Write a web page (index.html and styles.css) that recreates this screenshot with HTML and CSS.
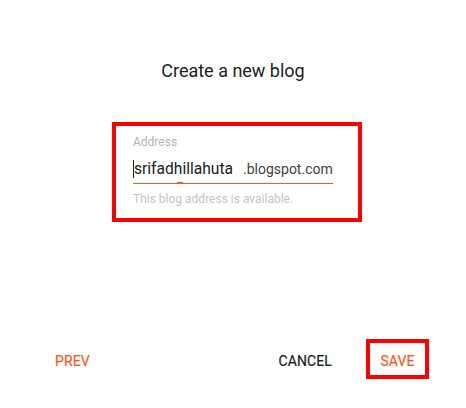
FILE: index.html
```html
<!DOCTYPE html>
<html>
<head>
<meta charset="utf-8">
<link rel="stylesheet" href="styles.css">
</head>
<body>
<div class="dialog">
  <h1 class="title">Create a new blog</h1>
  <div class="field-wrap">
    <div class="field">
      <div class="label">Address</div>
      <div class="input-row">
        <span class="caret"></span><span class="value">srifadhillahutami</span><span class="suffix">.blogspot.com</span>
      </div>
      <div class="underline"><span class="mark"></span></div>
      <div class="helper">This blog address is available.</div>
    </div>
  </div>
  <div class="actions">
    <button class="btn btn-prev">PREV</button>
    <div class="right">
      <button class="btn btn-cancel">CANCEL</button>
      <div class="save-box"><button class="btn btn-save">SAVE</button></div>
    </div>
  </div>
</div>
</body>
</html>
```
FILE: styles.css
```css
html, body {
  margin: 0;
  padding: 0;
  background: #ffffff;
}
body {
  font-family: Roboto, "Noto Sans", sans-serif;
}
.dialog {
  width: 466px;
  height: 408px;
  display: flex;
  flex-direction: column;
  box-sizing: border-box;
}
.title {
  margin: 60px 0 0 0;
  font-size: 18px;
  font-weight: 400;
  color: #212121;
  text-align: center;
  line-height: 22px;
}
.field-wrap {
  margin-top: 40px;
  padding-left: 112px;
}
.field {
  width: 250px;
  height: 100px;
  box-sizing: border-box;
  border: 4px solid #ff0000;
  padding: 9px 0 0 17px;
}
.label {
  font-size: 12px;
  color: #b4b4b4;
  line-height: 14px;
}
.input-row {
  margin-top: 9px;
  display: flex;
  align-items: center;
  height: 22px;
  width: 200px;
  line-height: 20px;
}
.caret {
  width: 1px;
  height: 18px;
  background: #212121;
  flex: none;
}
.value {
  width: 99px;
  overflow: hidden;
  white-space: nowrap;
  color: #212121;
  font-size: 15.6px;
  flex: none;
}
.suffix {
  margin-left: 10px;
  color: #424242;
  font-size: 14px;
  white-space: nowrap;
}
.underline {
  position: relative;
  width: 200px;
  height: 1px;
  background: #ff5722;
  margin-top: 3px;
}
.mark {
  position: absolute;
  left: 44px;
  top: -1px;
  width: 6px;
  height: 2px;
  background: #ff5722;
}
.helper {
  margin-top: 8px;
  font-size: 12px;
  color: #c6c6c6;
  line-height: 14px;
}
.actions {
  margin-top: auto;
  margin-bottom: 29px;
  display: flex;
  align-items: center;
  justify-content: space-between;
  padding: 0 37px 0 38px;
}
.right {
  display: flex;
  align-items: center;
  gap: 34px;
}
.btn {
  border: none;
  background: none;
  padding: 3px 0 0 0;
  font-family: Roboto, "Noto Sans", sans-serif;
  font-size: 14px;
  font-weight: 400;
  letter-spacing: 0.1px;
  cursor: pointer;
  -webkit-text-stroke: 0.2px currentColor;
}
.btn-prev {
  color: #ff5722;
  padding: 3px 17px 0 17px;
}
.btn-cancel {
  color: #212121;
}
.save-box {
  width: 63px;
  height: 40px;
  box-sizing: border-box;
  border: 4px solid #ff0000;
  display: flex;
  align-items: center;
  justify-content: center;
}
.btn-save {
  color: #ff5722;
}
```
